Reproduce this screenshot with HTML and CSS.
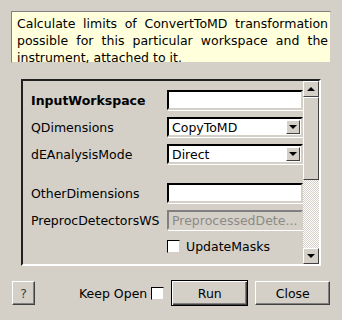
FILE: index.html
```html
<!DOCTYPE html>
<html lang="en">
<head>
  <meta charset="UTF-8">
  <title>ConvertToMDMinMaxGlobal</title>
  <link rel="stylesheet" href="styles.css">
</head>
<body>
<div class="dialog">
  <div class="desc">Calculate limits of ConvertToMD transformation possible for this particular workspace and the instrument, attached to it.</div>

  <div class="frame">
    <div class="props">
      <div class="row">
        <label class="lbl bold">InputWorkspace</label>
        <input class="field" type="text">
      </div>
      <div class="row">
        <label class="lbl">QDimensions</label>
        <div class="combo"><span>CopyToMD</span><span class="drop"><i class="tri-down"></i></span></div>
      </div>
      <div class="row">
        <label class="lbl">dEAnalysisMode</label>
        <div class="combo"><span>Direct</span><span class="drop"><i class="tri-down"></i></span></div>
      </div>
      <div class="row spaced">
        <label class="lbl">OtherDimensions</label>
        <input class="field" type="text">
      </div>
      <div class="row">
        <label class="lbl">PreprocDetectorsWS</label>
        <input class="field disabled" type="text" placeholder="PreprocessedDete..." disabled>
      </div>
      <div class="row check-row">
        <span></span>
        <label class="check"><span class="box"></span>UpdateMasks</label>
      </div>
    </div>
    <div class="scrollbar">
      <span class="sbtn"><i class="tri-up"></i></span>
      <span class="thumb"></span>
      <span class="track"></span>
      <span class="sbtn"><i class="tri-down"></i></span>
    </div>
  </div>

  <div class="actions">
    <button class="btn help">?</button>
    <label class="keep">Keep Open <span class="box"></span></label>
    <button class="btn run">Run</button>
    <button class="btn close">Close</button>
  </div>
</div>
</body>
</html>
```

FILE: styles.css
```css
body {
  margin: 0;
  background: #d4d0c8;
  font-family: "DejaVu Sans", sans-serif;
  font-size: 12.5px;
  color: #000;
}
.dialog {
  width: 342px;
  height: 320px;
  padding: 11px 11px 0 11px;
  box-sizing: border-box;
}
.desc {
  height: 52px;
  box-sizing: border-box;
  background: #ffffdc;
  border: 1px solid;
  border-color: #808080 #d4d0c8 #d4d0c8 #808080;
  padding: 3px 2px 0 5px;
  line-height: 17px;
  text-align: justify;
}
.frame {
  display: flex;
  margin: 16px 10px 0 10px;
  width: 300px;
  height: 187px;
  box-sizing: border-box;
  border: 2px solid;
  border-color: #202020 #ffffff #ffffff #202020;
  overflow: hidden;
}
.props {
  flex: 1;
  padding: 9px 0 0 8px;
  display: flex;
  flex-direction: column;
  gap: 7px;
}
.row {
  display: grid;
  grid-template-columns: 136px 136px;
  align-items: center;
  height: 20px;
}
.row.spaced {
  margin-top: 12px;
}
.row.check-row {
  margin-top: -1px;
}
.lbl {
  color: #000;
}
.bold {
  font-weight: bold;
}
.field, .combo {
  height: 20px;
  width: 136px;
  box-sizing: border-box;
  border: 2px solid;
  border-color: #000 #d4d0c8 #d4d0c8 #000;
  box-shadow: 1px 1px 0 #fff;
  background: #fff;
  font: inherit;
  padding: 0 3px;
  margin: 0;
  outline: none;
}
.field.disabled {
  background: #d4d0c8;
  border-color: #808080 #d4d0c8 #d4d0c8 #808080;
}
.field.disabled::placeholder {
  color: #8c8a86;
}
.combo {
  display: flex;
  align-items: center;
  justify-content: space-between;
  padding: 0 1px 0 3px;
}
.drop {
  width: 14px;
  height: 14px;
  box-sizing: border-box;
  background: #d4d0c8;
  border: 1px solid;
  border-color: #fff #404040 #404040 #fff;
  display: flex;
  align-items: center;
  justify-content: center;
}
.tri-down, .tri-up {
  width: 0;
  height: 0;
  border-left: 4px solid transparent;
  border-right: 4px solid transparent;
}
.tri-down {
  border-top: 4px solid #000;
}
.tri-up {
  border-bottom: 4px solid #000;
}
.check {
  display: flex;
  align-items: center;
  gap: 6px;
}
.box {
  display: inline-block;
  width: 13px;
  height: 13px;
  box-sizing: border-box;
  background: #fff;
  border: 1px solid;
  border-color: #000 #d4d0c8 #d4d0c8 #000;
}
.scrollbar {
  width: 16px;
  display: flex;
  flex-direction: column;
}
.sbtn {
  height: 16px;
  box-sizing: border-box;
  background: #d4d0c8;
  border: 1px solid;
  border-color: #fff #404040 #404040 #fff;
  display: flex;
  align-items: center;
  justify-content: center;
}
.thumb {
  height: 83px;
  box-sizing: border-box;
  background: #d4d0c8;
  border: 1px solid;
  border-color: #fff #404040 #404040 #fff;
}
.track {
  flex: 1;
  background-color: #fff;
  background-image: repeating-conic-gradient(#d4d0c8 0 25%, #fff 0 50%);
  background-size: 2px 2px;
}
.actions {
  display: flex;
  align-items: center;
  margin-top: 14px;
}
.btn {
  font: inherit;
  background: #d4d0c8;
  height: 24px;
  border: 1px solid;
  border-color: #fff #404040 #404040 #fff;
  box-shadow: inset -1px -1px 0 #808080;
  padding: 0;
}
.help {
  width: 23px;
  margin-left: 1px;
  color: #404040;
}
.keep {
  display: flex;
  align-items: center;
  gap: 4px;
  white-space: nowrap;
  margin-left: 44px;
}
.run {
  width: 77px;
  height: 26px;
  margin-left: 7px;
  border: 1px solid #000;
  box-shadow: inset 1px 1px 0 #fff, inset -1px -1px 0 #404040, inset -2px -2px 0 #808080;
}
.close {
  width: 75px;
  margin-left: 7px;
}
```
